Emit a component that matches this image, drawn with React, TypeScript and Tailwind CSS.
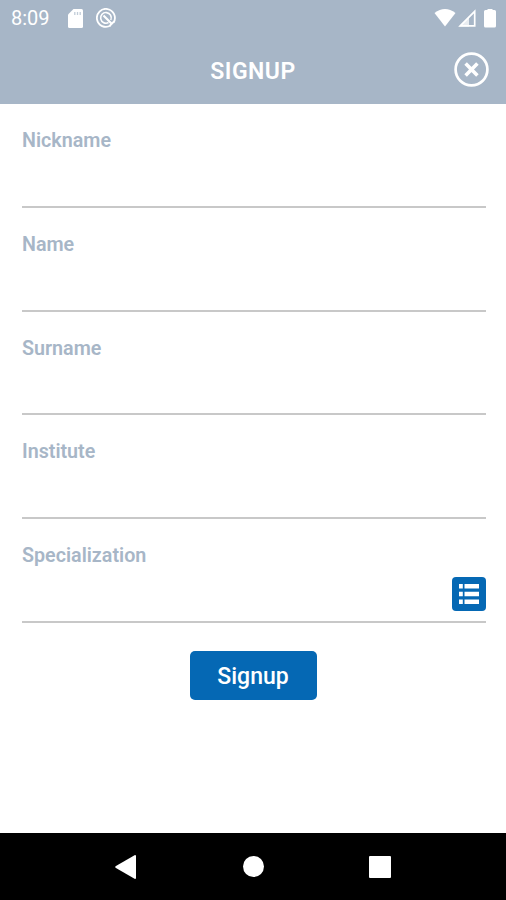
const fields = ["Nickname", "Name", "Surname", "Institute", "Specialization"];

function StatusBar() {
  return (
    <div className="flex h-9 items-center justify-between pl-[11px] pr-[10px]">
      <div className="flex items-center">
        <span className="w-[57px] text-[20px] leading-9">8:09</span>
        <svg className="mr-[13px] h-[19px] w-[15px]" viewBox="0 0 15 19">
          <path
            d="M5.5 0H13.5Q15 0 15 1.5V17.5Q15 19 13.5 19H1.5Q0 19 0 17.5V5.5Z"
            fill="white"
          />
          <path
            d="M6.8 3V6M9.5 3V6M12.2 3V6"
            stroke="#a7b6c7"
            strokeWidth="1.3"
            strokeOpacity="0.7"
          />
        </svg>
        <svg className="h-5 w-5" viewBox="0 0 20 20" fill="none" stroke="white">
          <path d="M14.5 17.6A9 9 0 1 1 17.6 14.5" strokeWidth="1.8" />
          <path d="M12.5 14.5A5.3 5.3 0 1 1 14.8 12" strokeWidth="1.6" />
          <path d="M7.5 7.5L16 16" strokeWidth="2.2" />
          <path d="M13.5 18L18 13.5" strokeWidth="1.8" />
        </svg>
      </div>
      <div className="flex items-center">
        <svg className="h-[18px] w-[22px]" viewBox="0 0 22 18" fill="white">
          <path d="M0.5 4Q11 -4 21.5 4L11 17.5Z" />
        </svg>
        <svg className="ml-[2px] h-[18px] w-[18px]" viewBox="0 0 18 18">
          <path
            d="M2.2 16.8L16.7 2.3V16.8Z"
            fill="none"
            stroke="white"
            strokeWidth="1.7"
          />
          <path d="M1 17.5L11 7.5V17.5Z" fill="white" fillOpacity="0.75" />
        </svg>
        <svg className="ml-[8px] h-[19px] w-3" viewBox="0 0 12 19" fill="white">
          <path d="M3.5 0H8.5V1H10.5Q12 1 12 2.5V17Q12 18.5 10.5 18.5H1.5Q0 18.5 0 17V2.5Q0 1 1.5 1H3.5Z" />
        </svg>
      </div>
    </div>
  );
}

function ListButton() {
  return (
    <button className="flex h-[34px] w-[34px] items-center justify-center rounded-[4px] bg-[#0568b4]">
      <svg className="h-5 w-5" viewBox="0 0 20 20" fill="white">
        <path d="M0 0H3.8V4.5H0ZM5.5 0H20V4.5H5.5Z" />
        <path d="M0 7.7H3.8V12.2H0ZM5.5 7.7H20V12.2H5.5Z" />
        <path d="M0 15.5H3.8V20H0ZM5.5 15.5H20V20H5.5Z" />
      </svg>
    </button>
  );
}

export default function App() {
  return (
    <div className="flex h-[900px] w-[506px] flex-col bg-white font-['Roboto',sans-serif]">
      <header className="h-[104px] bg-[#a7b6c7] text-white">
        <StatusBar />
        <div className="grid h-[68px] grid-cols-[1fr_auto_1fr] items-center pr-[17px]">
          <h1 className="col-start-2 pl-[17px] pt-[3px] text-[23px] font-semibold leading-[65px] tracking-[0.5px]">
            SIGNUP
          </h1>
          <button className="justify-self-end">
            <svg
              className="h-[36px] w-[36px]"
              viewBox="0 0 36 36"
              fill="none"
              stroke="white"
            >
              <circle cx="18.5" cy="17.5" r="15.9" strokeWidth="2.7" />
              <path
                d="M12.6 11.6L24.4 23.4M24.4 11.6L12.6 23.4"
                strokeWidth="3.6"
              />
            </svg>
          </button>
        </div>
      </header>

      <main className="flex-1 pl-[22px] pr-5">
        {fields.map((field) => (
          <div
            key={field}
            className="flex h-[103.75px] flex-col justify-between border-b-2 border-[#c8c8c8] pt-6"
          >
            <label className="text-[19.7px] font-semibold leading-[25px] text-[#a7b6c7]">
              {field}
            </label>
            {field === "Specialization" && (
              <div className="flex justify-end pb-[10px]">
                <ListButton />
              </div>
            )}
          </div>
        ))}
        <div className="flex justify-center pr-[2px] pt-[28px]">
          <button className="h-[49px] w-[127px] rounded-[5px] bg-[#0568b4] pt-[3px] text-[23px] font-medium text-white">
            Signup
          </button>
        </div>
      </main>

      <nav className="flex h-[67px] items-center justify-between bg-black px-[115px]">
        <svg className="h-6 w-[21px]" viewBox="0 0 21 24" fill="white">
          <path d="M0.5 11.2Q0 12 0.5 12.8L20 24Q21 24 21 23V1Q21 0 20 0Z" />
        </svg>
        <div className="ml-[2px] h-[21px] w-[21px] rounded-full bg-white" />
        <div className="h-[22px] w-[22px] rounded-[1px] bg-white" />
      </nav>
    </div>
  );
}
